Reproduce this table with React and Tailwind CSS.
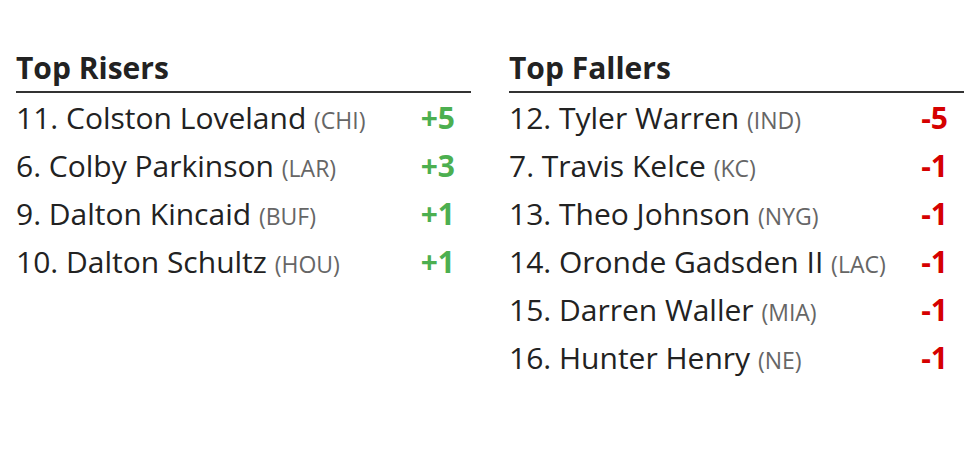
export default function App() {
  const risers = [
    ["11. Colston Loveland", "CHI", "+5"],
    ["6. Colby Parkinson", "LAR", "+3"],
    ["9. Dalton Kincaid", "BUF", "+1"],
    ["10. Dalton Schultz", "HOU", "+1"],
  ];
  const fallers = [
    ["12. Tyler Warren", "IND", "-5"],
    ["7. Travis Kelce", "KC", "-1"],
    ["13. Theo Johnson", "NYG", "-1"],
    ["14. Oronde Gadsden II", "LAC", "-1"],
    ["15. Darren Waller", "MIA", "-1"],
    ["16. Hunter Henry", "NE", "-1"],
  ];
  const Col = ({ title, rows, color }) => (
    <div className="w-[455px]">
      <div className="text-[30px] font-bold leading-[40px] text-[#222] pb-[3px] border-b-2 border-[#333]">{title}</div>
      <div className="pt-[1px]">
        {rows.map(([n, t, v]) => (
          <div key={n} className="flex items-baseline justify-between h-[48px] leading-[48px] pr-[16px]">
            <span className="text-[30px] text-[#222]">
              {n} <span className="text-[23px] text-[#666]">({t})</span>
            </span>
            <span className={`text-[30px] font-bold ${color}`}>{v}</span>
          </div>
        ))}
      </div>
    </div>
  );
  return (
    <div className="w-[976px] h-[466px] bg-white flex gap-[38px] pl-[16px] pt-[48px]" style={{ fontFamily: '"Open Sans", sans-serif' }}>
      <Col title="Top Risers" rows={risers} color="text-[#4caf50]" />
      <Col title="Top Fallers" rows={fallers} color="text-[#d50000]" />
    </div>
  );
}
